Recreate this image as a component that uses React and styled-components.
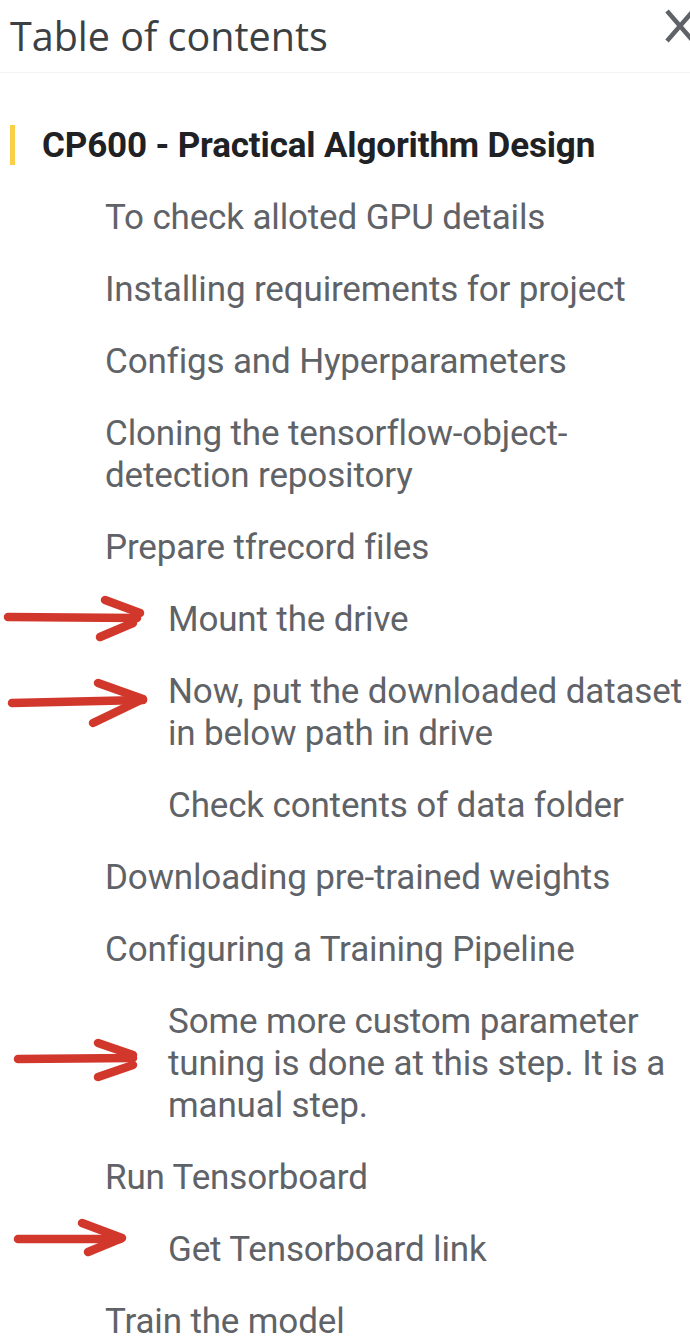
// Libraries
import React from 'react'
import styled, { createGlobalStyle } from 'styled-components'


// ============================================================================================================ Data

const items = [
    { level: 1, text: "CP600 - Practical Algorithm Design", active: true },
    { level: 2, text: "To check alloted GPU details" },
    { level: 2, text: "Installing requirements for project" },
    { level: 2, text: "Configs and Hyperparameters" },
    { level: 2, text: "Cloning the tensorflow-object-detection repository" },
    { level: 2, text: "Prepare tfrecord files" },
    { level: 3, text: "Mount the drive", arrow: "a" },
    { level: 3, text: "Now, put the downloaded dataset in below path in drive", arrow: "b" },
    { level: 3, text: "Check contents of data folder" },
    { level: 2, text: "Downloading pre-trained weights" },
    { level: 2, text: "Configuring a Training Pipeline" },
    { level: 3, text: "Some more custom parameter tuning is done at this step. It is a manual step.", arrow: "c" },
    { level: 2, text: "Run Tensorboard" },
    { level: 3, text: "Get Tensorboard link", arrow: "d" },
    { level: 2, text: "Train the model" },
]

// hand drawn arrows, coords relative to the row top
const arrows = {
    a: { shaft: "M8 34 L137 35", head: "M105 17 L140 30 M133 40 L100 54" },
    b: { shaft: "M12 48 L143 45", head: "M98 28 L143 44 L93 68" },
    c: { shaft: "M18 74 L133 73", head: "M98 58 L133 70 M133 80 L98 92" },
    d: { shaft: "M18 26 L120 26", head: "M82 10 L122 25 L88 39" },
}


// ============================================================================================================ Logic

const Arrow = ({ id }) => {
    const a = arrows[id]
    return (
        <ArrowMark width="160" height="110" viewBox="0 0 160 110">
            <path d={a.shaft} />
            <path d={a.head} />
        </ArrowMark>
    )
}

const App = () => {
    return (
        <>
            <GlobalStyle />
            <Panel>
                <Header>
                    <Title>Table of contents</Title>
                    <CloseButton aria-label="Close">
                        <svg width="30" height="34" viewBox="0 0 30 34">
                            <path d="M2 2 L28 32 M28 2 L2 32" />
                        </svg>
                    </CloseButton>
                </Header>
                <List>
                    {items.map((item, i) => (
                        <Entry key={i} level={item.level} active={item.active}>
                            {item.arrow && <Arrow id={item.arrow} />}
                            {item.text}
                        </Entry>
                    ))}
                </List>
            </Panel>
        </>
    )
}


// ============================================================================================================ Styles

const GlobalStyle = createGlobalStyle`
    html, body {
        margin: 0;
        background: #fff;
        overflow: hidden;
    }
    body {
        font-family: Roboto, "Liberation Sans", sans-serif;
    }
`

const Panel = styled.div`
    width: 690px;
    height: 1336px;
    overflow: hidden;
    background: #fff;
`

const Header = styled.div`
    display: flex;
    align-items: flex-start;
    justify-content: space-between;
    height: 73px;
    padding-left: 10px;
    border-bottom: 1px solid #f4f4f4;
    box-sizing: border-box;
`

const Title = styled.div`
    font-family: "Open Sans", Roboto, sans-serif;
    font-size: 39.5px;
    line-height: 1;
    color: #3c4043;
    margin-top: 17px;
`

const CloseButton = styled.div`
    display: flex;
    margin-top: 9px;
    margin-right: -5px;

    svg path {
        stroke: #5f6368;
        stroke-width: 4.5;
        fill: none;
    }
`

const List = styled.div`
    display: flex;
    flex-direction: column;
    padding-top: 37px;
`

const Entry = styled.div`
    position: relative;
    padding: 15px 4px 15px ${({ level }) => (level === 1 ? 42 : level === 2 ? 105 : 168)}px;
    font-size: 35px;
    line-height: 42px;
    letter-spacing: -0.15px;
    color: ${({ level }) => (level === 1 ? '#202124' : '#5f6368')};
    font-weight: ${({ level }) => (level === 1 ? 700 : 400)};

    &::before {
        content: ${({ active }) => (active ? '""' : 'none')};
        position: absolute;
        left: 10px;
        top: 15px;
        width: 5px;
        height: 40px;
        background: #f8cf46;
    }
`

const ArrowMark = styled.svg`
    position: absolute;
    left: 0;
    top: -1px;

    path {
        stroke: #d2372c;
        stroke-width: 8.5;
        stroke-linecap: round;
        stroke-linejoin: round;
        fill: none;
    }
`

export default App
